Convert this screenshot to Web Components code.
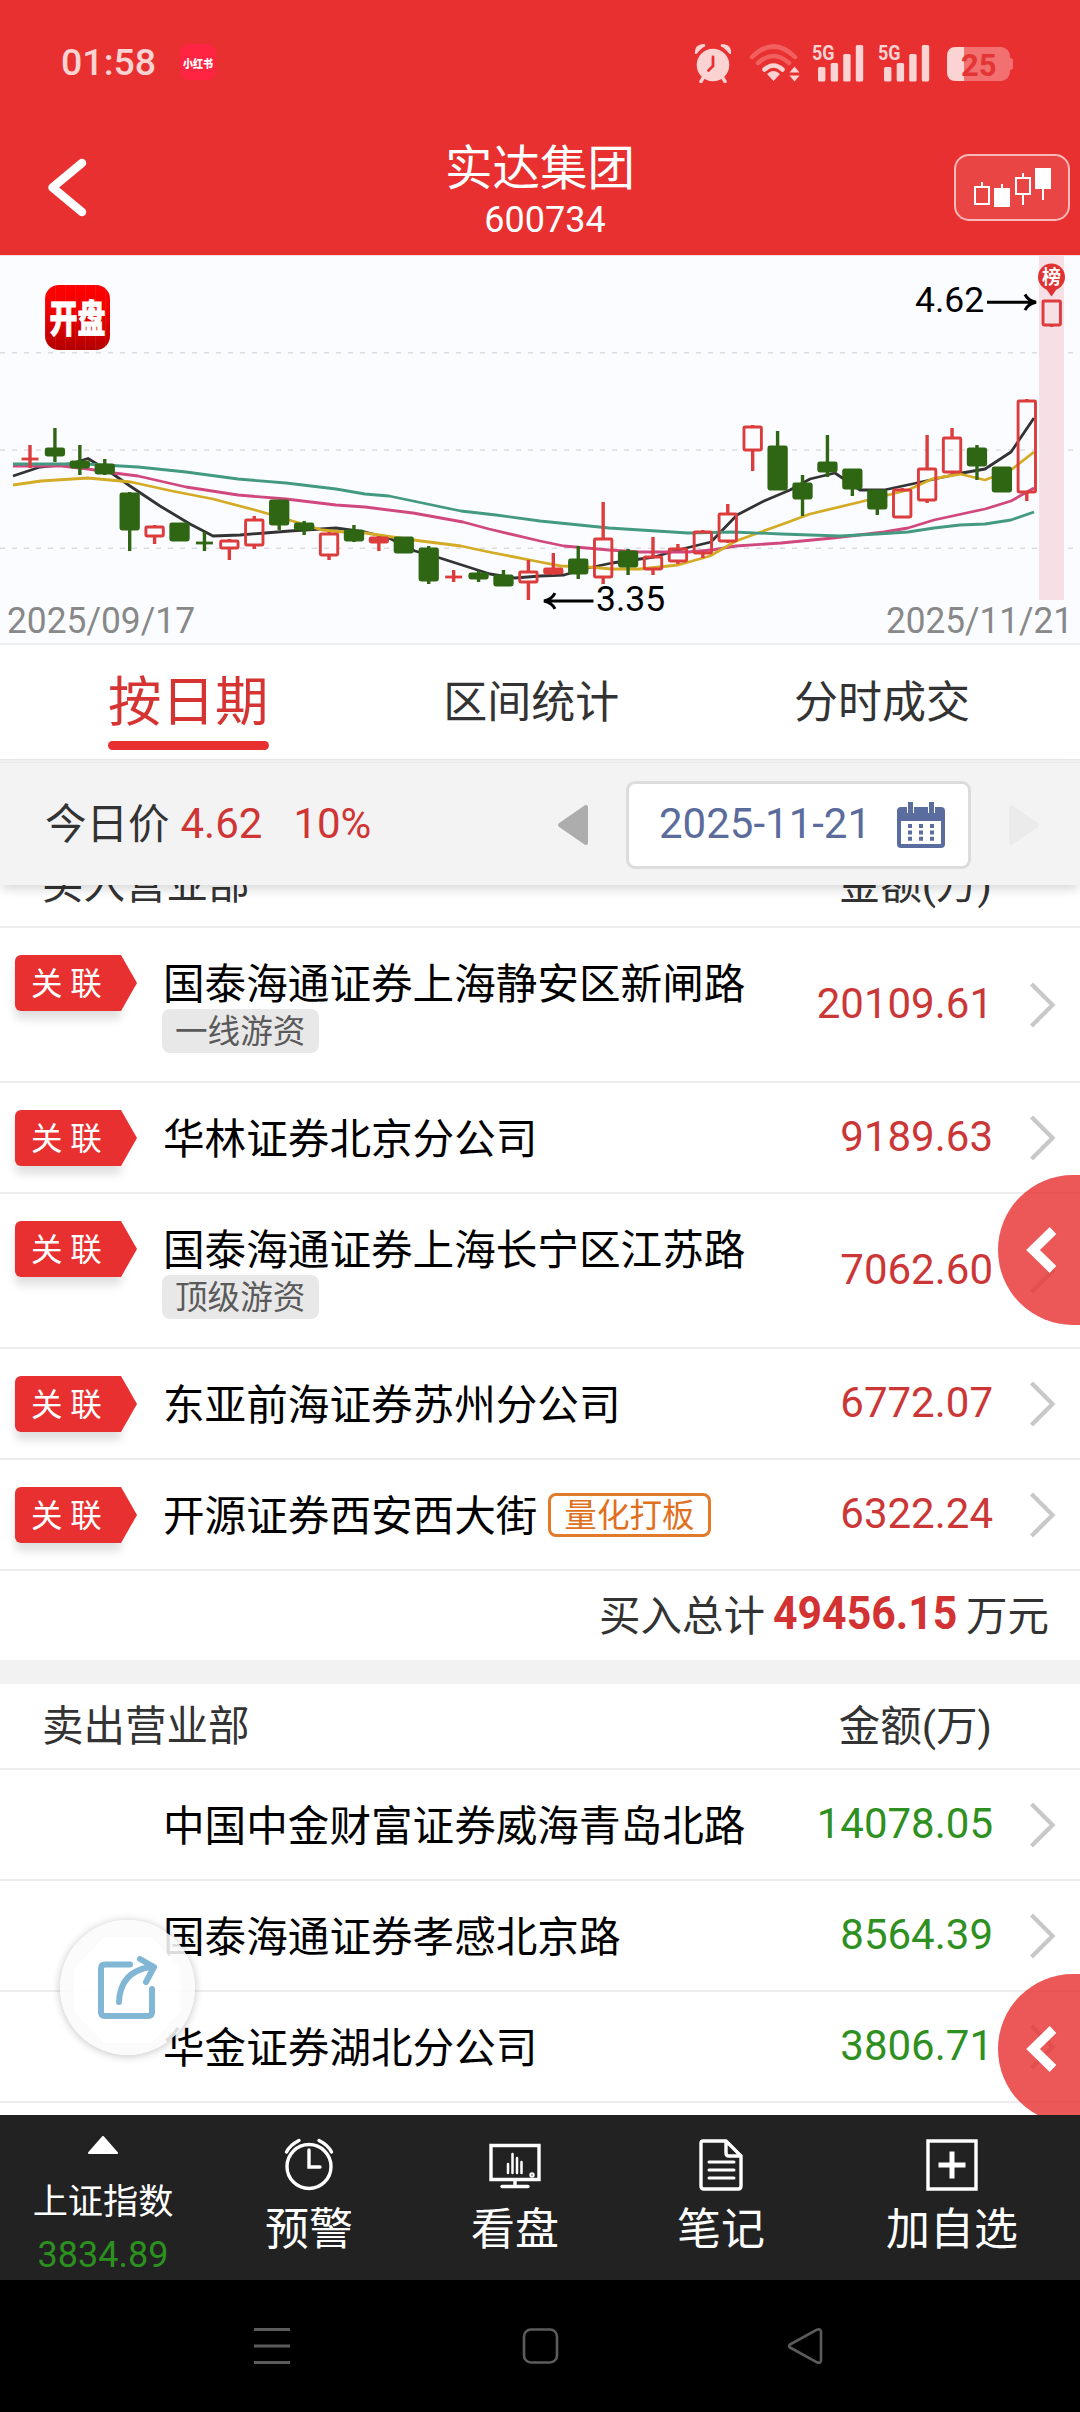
<!DOCTYPE html>
<html lang="zh-CN">
<head>
    <meta charset="UTF-8">
    <meta name="viewport" content="width=device-width, initial-scale=1.0">
    <title>实达集团 600734</title>
    <style>
        body {
            margin: 0;
            background: #fff;
            font-family: Roboto, 'Noto Sans CJK SC', sans-serif;
            font-weight: 400;
            color: #333;
        }
    </style>
</head>
<body>
    <stock-page>
        <status-bar slot="top" time="01:58" battery="25"></status-bar>
        <title-bar slot="top" name="实达集团" code="600734"></title-bar>
        <kline-chart slot="top" from="2025/09/17" to="2025/11/21"></kline-chart>
        <tab-bar slot="top">
            <tab-item active>按日期</tab-item>
            <tab-item>区间统计</tab-item>
            <tab-item>分时成交</tab-item>
        </tab-bar>
        <price-bar slot="top" price="4.62" rate="10%" date="2025-11-21"></price-bar>

        <seat-list class="buy" heading="买入营业部" style="margin-top: -43px">
            <seat-row linked amount="20109.61" tag="一线游资">国泰海通证券上海静安区新闸路</seat-row>
            <seat-row linked amount="9189.63">华林证券北京分公司</seat-row>
            <seat-row linked amount="7062.60" tag="顶级游资">国泰海通证券上海长宁区江苏路</seat-row>
            <seat-row linked amount="6772.07">东亚前海证券苏州分公司</seat-row>
            <seat-row linked amount="6322.24" quant="量化打板">开源证券西安西大街</seat-row>
            <seat-total slot="total" amount="49456.15"></seat-total>
        </seat-list>
        <seat-list heading="卖出营业部" style="--amount: #2f9022">
            <seat-row amount="14078.05">中国中金财富证券威海青岛北路</seat-row>
            <seat-row amount="8564.39">国泰海通证券孝感北京路</seat-row>
            <seat-row amount="3806.71">华金证券湖北分公司</seat-row>
        </seat-list>

        <side-handle slot="float" style="top: 1175px"></side-handle>
        <side-handle slot="float" style="top: 1974px"></side-handle>
        <share-button slot="float"></share-button>

        <tool-bar slot="bottom" index="上证指数" value="3834.89"></tool-bar>
        <nav-keys slot="bottom"></nav-keys>
    </stock-page>

    <script>
        // 简单基类：把模板写进 shadow root
        class BaseElement extends HTMLElement {
            constructor() {
                super();
                this.attachShadow({ mode: 'open' });
            }

            connectedCallback() {
                this.shadowRoot.innerHTML = this.render();
            }

            attr(name) {
                return this.getAttribute(name) || '';
            }
        }

        // 页面骨架
        class StockPage extends BaseElement {
            render() {
                return `
                    <style>
                        :host {
                            display: flex;
                            flex-direction: column;
                            position: relative;
                            width: 1080px;
                            height: 2412px;
                            overflow: hidden;
                        }
                        main {
                            flex: 1;
                            min-height: 0;
                            overflow: hidden;
                        }
                        header, footer {
                            position: relative;
                            z-index: 2;
                        }
                    </style>
                    <header><slot name="top"></slot></header>
                    <main><slot></slot></main>
                    <slot name="float"></slot>
                    <footer><slot name="bottom"></slot></footer>
                `;
            }
        }

        // 系统状态栏
        class StatusBar extends BaseElement {
            signal() {
                return `
                    <svg width="53" height="44" viewBox="0 -4 53 44" fill="#fcd3d3">
                        <text x="0" y="17.3" font-size="21" font-weight="700" textLength="22.500" lengthAdjust="spacingAndGlyphs">5G</text>
                        <rect x="6" y="24" width="7.4" height="14.5" rx="1.5"/>
                        <rect x="18.7" y="20" width="7.4" height="18.5" rx="1.5"/>
                        <rect x="31.2" y="11" width="7.4" height="27.5" rx="1.5"/>
                        <rect x="43.8" y="2" width="7.4" height="36.5" rx="1.5"/>
                    </svg>
                `;
            }

            render() {
                return `
                    <style>
                        :host {
                            display: flex;
                            align-items: center;
                            height: 124px;
                            padding: 0 67px 0 61px;
                            background: #e83030;
                            color: #fcd3d3;
                        }
                        .time {
                            font-size: 37.5px;
                            font-weight: 500;
                            width: 119px;
                        }
                        .app {
                            display: flex;
                            align-items: center;
                            justify-content: center;
                            width: 36px;
                            height: 36px;
                            border-radius: 9px;
                            background: #ff2442;
                            color: #fff;
                            font-size: 10px;
                            font-weight: 900;
                        }
                        .app span { transform: scaleY(1.15); }
                        .icons {
                            display: flex;
                            align-items: flex-end;
                            margin-left: auto;
                            gap: 13px;
                        }
                        .alarm { margin-right: 4px; }
                        .wifi { margin-right: -1px; }
                        .icons svg { margin-bottom: 2px; }
                    </style>
                    <span class="time">${this.attr('time')}</span>
                    <span class="app"><span>小红书</span></span>
                    <div class="icons">
                        <svg class="alarm" width="38" height="40" viewBox="0 0 38 40" fill="#fcd3d3">
                            <circle cx="19" cy="22" r="16.3"/>
                            <path d="M1 11Q0 1 10.500 1Q12 2 11 3.500Q7 5 2.500 11ZM37 11Q38 1 27.500 1Q26 2 27 3.500Q31 5 35.500 11Z"/>
                            <path d="M9 35l-2 3.500M29 35l2 3.500" stroke="#fcd3d3" stroke-width="3.500" stroke-linecap="round"/>
                            <path d="M19 14v9l-4.500 4.500" fill="none" stroke="#e83030" stroke-width="2.800" stroke-linecap="round"/>
                        </svg>
                        <svg class="wifi" width="51" height="40" viewBox="0 0 51 40" fill="none" stroke-width="4.500" stroke-linecap="round">
                            <path d="M3 14Q24.500 -7 46 14" stroke="#f25f5f"/>
                            <path d="M9 20Q24.500 6 40 20" stroke="#f25f5f"/>
                            <path d="M15.500 26.500Q24.500 18.500 33.500 26.500" stroke="#fcd3d3"/>
                            <path d="M18 31Q24.500 25 31 31L24.500 38ZM40.500 29.500l5-6 5 6ZM40.500 32.500l5 6 5-6Z" fill="#fcd3d3" stroke="none"/>
                        </svg>
                        ${this.signal()}
                        ${this.signal()}
                        <svg width="69" height="40" viewBox="-2 0 69 40">
                            <rect x="1" y="4" width="63" height="34" rx="9" fill="#f27070"/>
                            <path d="M64 15q3 0 3 3v6q0 3-3 3Z" fill="#f27070"/>
                            <path d="M18 4H10Q1 4 1 13V29Q1 38 10 38H18Z" fill="#fcd3d3"/>
                            <text x="15" y="32.500" font-size="31" font-weight="700" fill="#e33535">${this.attr('battery')}</text>
                        </svg>
                    </div>
                `;
            }
        }

        // 标题栏
        class TitleBar extends BaseElement {
            render() {
                return `
                    <style>
                        :host {
                            display: grid;
                            grid-template-columns: 126px 1fr 126px;
                            height: 131px;
                            background: #e83030;
                            color: #fff;
                        }
                        .back { margin: 31px 0 0 44px; }
                        .title {
                            display: flex;
                            flex-direction: column;
                            align-items: center;
                        }
                        .name {
                            margin-top: 12px;
                            font-size: 47.5px;
                            line-height: 66px;
                        }
                        .code {
                            padding-left: 10px;
                            font-size: 36px;
                            line-height: 36px;
                        }
                        .kbtn {
                            box-sizing: border-box;
                            width: 116px;
                            height: 67px;
                            margin-top: 30px;
                            border: 2px solid #f9b9b9;
                            border-radius: 15px;
                            background: rgba(255, 255, 255, .1);
                        }
                    </style>
                    <svg class="back" width="44" height="64" fill="none" stroke="#fff" stroke-width="8.500" stroke-linecap="round" stroke-linejoin="round">
                        <path d="M38 8L8.500 32.500L38 57"/>
                    </svg>
                    <div class="title">
                        <span class="name">${this.attr('name')}</span>
                        <span class="code">${this.attr('code')}</span>
                    </div>
                    <div class="kbtn">
                        <svg width="112" height="63" fill="none" stroke="#fff" stroke-width="2">
                            <path d="M19 31h14v17H19ZM26 30v-4M60 22h14v16H60ZM67 21v-4M67 39v10"/>
                            <path d="M39 33h14v17H39ZM80 13h14v19H80Z" fill="#fff"/>
                            <path d="M46 33v-5M87 32v12"/>
                        </svg>
                    </div>
                `;
            }
        }

        // K线：[颜色, 最高, 实体上沿, 实体下沿, 最低]，单位为图内像素
        const CANDLES = [
            ['r', 190, 204, 204, 213], ['g', 173, 193, 200, 207], ['g', 190, 206, 212, 220],
            ['g', 204, 209, 218, 220], ['g', 237, 238, 274, 296], ['r', 270, 271, 281, 289],
            ['g', 268, 268, 285, 285], ['g', 277, 288, 288, 296], ['r', 284, 285, 293, 305],
            ['r', 261, 264, 290, 294], ['g', 245, 245, 269, 275], ['g', 266, 268, 274, 280],
            ['r', 277, 278, 300, 305], ['g', 270, 275, 285, 287], ['r', 281, 282, 287, 296],
            ['g', 282, 282, 297, 298], ['g', 291, 293, 325, 329], ['r', 315, 322, 322, 327],
            ['g', 316, 318, 323, 327], ['g', 315, 320, 330, 330], ['r', 305, 316, 327, 345],
            ['r', 298, 313, 318, 320], ['g', 291, 304, 318, 324], ['r', 247, 283, 322, 329],
            ['g', 294, 296, 311, 320], ['r', 282, 301, 314, 320], ['r', 289, 293, 306, 309],
            ['r', 275, 276, 298, 303], ['r', 249, 258, 286, 288], ['r', 170, 171, 195, 216],
            ['g', 176, 191, 234, 234], ['g', 220, 228, 243, 261], ['g', 180, 207, 216, 222],
            ['g', 214, 214, 233, 241], ['g', 235, 235, 253, 260], ['r', 233, 234, 262, 263],
            ['r', 180, 213, 245, 248], ['r', 173, 182, 217, 219], ['g', 190, 193, 210, 225],
            ['g', 212, 212, 236, 237], ['r', 144, 145, 237, 246], ['r', 45, 45, 70, 72]
        ];

        // 四条均线
        const AVERAGES = [
            ['#333', '13,221 40,212 70,209 88,203.5 110,217 130,231 160,251 190,269 213,281 240,280 265,278 290,276 336,273 365,277 389,283 415,296 440,303 465,311 490,319 515,323 540,321 564,320 588,313 612,308 654,302 678,295 711,287 737,260 764,246 790,235 810,224 835,218 860,235 884,235 912,229 962,218 985,214 1011,197 1034,163'],
            ['#d1487f', '13,211 62,211 88,214 114,218 138,221 186,232 238,240 286,244 336,250 365,252 413,258 463,267 489,274 540,286 564,291 609,295 640,297 688,297 712,295 736,291 781,288 833,283 884,277 908,273 934,265 985,254 1011,246 1034,233'],
            ['#d3ab25', '13,230 41,226 88,223 131,227 172,236 213,244 255,255 286,264 322,275 344,277 365,278 413,285 461,291 489,297 540,307 561,311 588,312 612,314 640,314 678,310 710,301 736,286 783,269 810,259 860,247 908,235 932,224 960,219 985,225 1011,215 1034,197'],
            ['#439a80', '13,209 86,209 138,212 186,217 238,224 286,228 336,234 365,239 389,241 413,246 461,256 496,260 540,266 609,273 688,278 733,277 781,279 840,281 877,279 908,277 934,273 960,270 985,269 1011,265 1034,257']
        ];

        class KlineChart extends BaseElement {
            candle([color, high, top, bottom, low], i) {
                const x = 30 + 24.92 * i;
                const stroke = color === 'r' ? '#dc3c3c' : '#2f6613';
                const wick = (a, b) => b > a ? `<path d="M${x} ${a}V${b}" stroke="${stroke}" stroke-width="3.4"/>` : '';

                // 十字星
                if (top === bottom) {
                    return wick(high, low) + `<path d="M${x - 8.5} ${top}h17" stroke="${stroke}" stroke-width="2.8"/>`;
                }
                const hollow = color === 'r' && bottom - top > 5;
                return wick(high, top) + wick(bottom, low) +
                    `<rect x="${x - 8.7}" y="${top + 1}" width="17.4" height="${bottom - top - 1}" rx="1"
                        fill="${hollow ? 'none' : stroke}" stroke="${stroke}" stroke-width="2.9"/>`;
            }

            render() {
                const grid = [97.7, 195, 293.3].map(y => `<path d="M0 ${y}H1080"/>`).join('');
                const lines = AVERAGES.map(([c, p]) => `<polyline points="${p}" stroke="${c}"/>`).join('');
                return `
                    <style>
                        :host {
                            display: block;
                            position: relative;
                            height: 390px;
                            background: #fbfcff;
                            box-shadow: inset 0 1px #fdd9dc, inset 0 -2px #eeeff1;
                        }
                        svg { display: block; }
                        .logo {
                            position: absolute;
                            left: 45px;
                            top: 30px;
                            display: flex;
                            align-items: center;
                            justify-content: center;
                            width: 65px;
                            height: 65px;
                            border-radius: 14px;
                            background:
                                repeating-linear-gradient(90deg, rgba(255,255,255,.08) 0 1px, transparent 1px 10px),
                                linear-gradient(#ff0000, #f40000 35%, #b30000);
                            color: #fff;
                            font-size: 28px;
                            font-weight: 900;
                        }
                        .logo span {
                            margin-top: -3px;
                            transform: scaleY(1.35);
                            -webkit-text-stroke: .6px #fff;
                        }
                    </style>
                    <svg width="1080" height="390" viewBox="0 0 1080 390">
                        <g stroke="#dadce2" stroke-width="1.6" stroke-dasharray="5 7">${grid}</g>
                        <rect x="1039" y="1" width="25" height="344" fill="#f6dfe5"/>
                        <g fill="none" stroke-width="2.8" stroke-linejoin="round">${lines}</g>
                        ${CANDLES.map((c, i) => this.candle(c, i)).join('')}
                        <path d="M1051.500 41.500l-7-10h14Z" fill="#e03232"/>
                        <circle cx="1051.500" cy="22" r="13.500" fill="#e03232"/>
                        <text x="1042" y="29" font-size="19" font-weight="700" fill="#fff">榜</text>
                        <g fill="none" stroke="#000" stroke-width="3">
                            <path d="M987 47.300h48M1025 39.500q3 6 11 7.800q-8 1.800-11 7.800"/>
                            <path d="M593.500 346h-48M555 338.200q-3 6-11 7.800q8 1.800 11 7.800"/>
                        </g>
                        <g font-size="35.500" fill="#000">
                            <text x="915" y="57">4.62</text>
                            <text x="596" y="356">3.35</text>
                        </g>
                        <g font-size="36" fill="#888">
                            <text x="7" y="378" textLength="188" lengthAdjust="spacingAndGlyphs">${this.attr('from')}</text>
                            <text x="886" y="378" textLength="187" lengthAdjust="spacingAndGlyphs">${this.attr('to')}</text>
                        </g>
                    </svg>
                    <div class="logo"><span>开盘</span></div>
                `;
            }
        }

        // 标签页
        class TabBar extends BaseElement {
            render() {
                return `
                    <style>
                        :host {
                            display: flex;
                            justify-content: space-between;
                            height: 114px;
                            padding: 0 110px 0 108px;
                            background: #fff;
                        }
                    </style>
                    <slot></slot>
                `;
            }
        }

        class TabItem extends BaseElement {
            render() {
                return `
                    <style>
                        :host {
                            display: block;
                            font-size: 44px;
                            line-height: 117px;
                        }
                        :host([active]) {
                            color: #d63333;
                            font-size: 53.5px;
                            line-height: 115px;
                        }
                        i { display: none; }
                        :host([active]) i {
                            display: block;
                            height: 9px;
                            margin-top: -19px;
                            border-radius: 5px;
                            background: #e83030;
                        }
                    </style>
                    <slot></slot><i></i>
                `;
            }
        }

        // 当日价格和日期选择
        class PriceBar extends BaseElement {
            render() {
                return `
                    <style>
                        :host {
                            display: flex;
                            align-items: center;
                            box-sizing: border-box;
                            height: 126px;
                            padding: 5px 40px 0 45px;
                            background: #f3f3f3;
                            font-size: 41.5px;
                            box-shadow: inset 0 1px #e6e6e6, inset 0 3px #f1f1f1, inset 0 4px #e9e9e9, 0 6px 10px -2px rgba(0, 0, 0, .16);
                        }
                        .label { padding-bottom: 7px; }
                        b {
                            padding-bottom: 3px;
                            font-weight: 400;
                            font-size: 42px;
                            color: #cf3535;
                        }
                        .price { margin-left: 11px; }
                        .rate { margin-left: 31px; }
                        .prev { margin-left: auto; }
                        .date {
                            display: flex;
                            align-items: center;
                            justify-content: space-between;
                            box-sizing: border-box;
                            width: 345px;
                            height: 88px;
                            margin: 0 38px;
                            padding: 0 23px 0 30px;
                            border: 3px solid #dcdcdc;
                            border-radius: 9px;
                            background: #fff;
                            font-size: 42px;
                            color: #5b6c9c;
                        }
                        .date span { padding-bottom: 2px; }
                    </style>
                    <span class="label">今日价</span>
                    <b class="price">${this.attr('price')}</b>
                    <b class="rate">${this.attr('rate')}</b>
                    <svg class="prev" width="31" height="42" fill="#adadad" stroke="#adadad" stroke-width="4" stroke-linejoin="round"><path d="M3 21L29 3V39Z"/></svg>
                    <div class="date">
                        <span>${this.attr('date')}</span>
                        <svg width="48" height="48" viewBox="0 0 48 48">
                            <rect y="6" width="48" height="41" rx="4" fill="#5b6c9e"/>
                            <rect x="4" y="20" width="40" height="23" fill="#fff"/>
                            <path d="M13.500 1v11M34.500 1v11" stroke="#fff" stroke-width="7"/>
                            <path d="M13.500 1v11M34.500 1v11" stroke="#5b6c9e" stroke-width="5"/>
                            <path d="M13 23v18M24 23v18M35 23v18" stroke="#5b6c9e" stroke-width="4" stroke-dasharray="4 2.400"/>
                        </svg>
                    </div>
                    <svg width="31" height="42" fill="#ebebeb" stroke="#ebebeb" stroke-width="4" stroke-linejoin="round"><path d="M28 21L2 3V39Z"/></svg>
                `;
            }
        }

        // 营业部列表
        class SeatList extends BaseElement {
            render() {
                return `
                    <style>
                        :host {
                            display: block;
                            background: #fff;
                        }
                        .head {
                            display: flex;
                            align-items: center;
                            justify-content: space-between;
                            box-sizing: border-box;
                            height: 86px;
                            padding: 0 88px 7px 42px;
                            border-bottom: 2px solid #ededed;
                            font-size: 41.5px;
                        }
                    </style>
                    <div class="head"><span>${this.attr('heading')}</span><span>金额(万)</span></div>
                    <slot></slot>
                    <slot name="total"></slot>
                `;
            }
        }

        class SeatRow extends BaseElement {
            render() {
                const tag = this.attr('tag');
                const quant = this.attr('quant');
                return `
                    <style>
                        :host {
                            display: flex;
                            box-sizing: border-box;
                            min-height: 111px;
                            border-bottom: 2px solid #ededed;
                        }
                        .left {
                            width: 148px;
                            padding: 27px 0 0 15px;
                        }
                        .link {
                            display: flex;
                            align-items: center;
                            position: relative;
                            box-sizing: border-box;
                            width: 106px;
                            height: 56px;
                            padding: 0 0 4px 16px;
                            border-radius: 6px 0 0 6px;
                            background: #e83030;
                            box-shadow: 0 8px 10px rgba(0, 0, 0, .13);
                            color: #fff;
                            font-size: 31.5px;
                            white-space: nowrap;
                        }
                        .link::after {
                            content: '';
                            position: absolute;
                            left: 100%;
                            top: 0;
                            border: solid transparent;
                            border-width: 28px 0 28px 16px;
                            border-left-color: #e83030;
                        }
                        .info {
                            flex: 1;
                            padding-top: 27px;
                        }
                        .name {
                            display: flex;
                            align-items: center;
                            height: 56px;
                            color: #000;
                            font-size: 41.6px;
                            white-space: nowrap;
                        }
                        .text { padding-bottom: 5px; }
                        .tag, .quant {
                            display: flex;
                            align-items: center;
                            box-sizing: border-box;
                            width: fit-content;
                            height: 44px;
                            border-radius: 8px;
                            font-size: 32.6px;
                        }
                        .tag {
                            margin: -2px 0 28px -1px;
                            padding: 0 14px 5px 13px;
                            background: #e8e8e8;
                            color: #5a5a5a;
                        }
                        .quant {
                            margin-left: 11px;
                            padding: 0 13px 5px;
                            border: 3px solid #e07b2c;
                            color: #e07020;
                        }
                        .amount {
                            display: flex;
                            align-items: center;
                            padding-bottom: 3px;
                            color: var(--amount, #cb3737);
                            font-size: 42px;
                        }
                        .go {
                            align-self: center;
                            margin: 0 23px 0 36px;
                        }
                    </style>
                    <div class="left">${this.hasAttribute('linked') ? '<div class="link">关 联</div>' : ''}</div>
                    <div class="info">
                        <div class="name"><span class="text"><slot></slot></span>${quant ? `<span class="quant">${quant}</span>` : ''}</div>
                        ${tag ? `<div class="tag">${tag}</div>` : ''}
                    </div>
                    <span class="amount">${this.attr('amount')}</span>
                    <svg class="go" width="28" height="46" fill="none" stroke="#c8c8c8" stroke-width="4.200"><path d="M2.500 2L23.500 23L2.500 44"/></svg>
                `;
            }
        }

        class SeatTotal extends BaseElement {
            render() {
                return `
                    <style>
                        :host {
                            display: flex;
                            align-items: center;
                            justify-content: flex-end;
                            box-sizing: border-box;
                            height: 113px;
                            padding: 0 31px 5px 0;
                            border-bottom: 24px solid #f2f2f2;
                            font-size: 41.5px;
                        }
                        b {
                            width: 185px;
                            margin: 0 8px;
                            font-size: 46.5px;
                            transform: scaleX(.92);
                            transform-origin: 0 50%;
                            color: #d23232;
                        }
                    </style>
                    <span>买入总计</span><b>${this.attr('amount')}</b><span>万元</span>
                `;
            }
        }

        // 右侧半圆抽屉把手
        class SideHandle extends BaseElement {
            render() {
                return `
                    <style>
                        :host {
                            position: absolute;
                            right: 0;
                            z-index: 1;
                            width: 82px;
                            height: 150px;
                            border-radius: 75px 0 0 75px;
                            background: rgba(232, 48, 48, .81);
                        }
                        svg { display: block; }
                    </style>
                    <svg width="82" height="150" fill="none" stroke="#fff" stroke-width="9.500"><path d="M55 55.500L35 75L55 94.500"/></svg>
                `;
            }
        }

        // 分享悬浮按钮
        class ShareButton extends BaseElement {
            render() {
                return `
                    <style>
                        :host {
                            position: absolute;
                            left: 60px;
                            top: 1920px;
                            z-index: 1;
                            width: 135px;
                            height: 135px;
                            border-radius: 50%;
                            background: rgba(250, 250, 250, .88);
                            box-shadow: 0 1px 8px rgba(0, 0, 0, .24);
                        }
                        svg { display: block; }
                    </style>
                    <svg width="135" height="135" fill="none" stroke="#82b6d5" stroke-width="6" stroke-linecap="round" stroke-linejoin="round">
                        <path d="M44 17H92L121 49V91L92 123H44L14 91V49Z" fill="#fff" fill-opacity=".85" stroke="none"/>
                        <path d="M70 44.500H45q-4 0-4 4V92q0 4 4 4H88q4 0 4-4V69"/>
                        <path d="M59 82Q60 52 90 47"/>
                        <path d="M80 39L94 47L86 62"/>
                    </svg>
                `;
            }
        }

        // 底部工具栏
        const TOOLS = [
            ['预警', '<circle cx="28" cy="30.500" r="22"/><path d="M28 14v17h11M5.500 16Q9 9 18 4.500M50.500 16Q47 9 38 4.500"/>'],
            ['看盘', '<path d="M4 9.500H52V43.500H4ZM28 44v6M15 50.500H41"/><path d="M21 28v9M25.500 18v19M30 22v15M34.500 26v11" stroke-width="2.500"/><circle cx="45" cy="39" r="1" />'],
            ['笔记', '<path d="M10 5H33L48 20V50q0 3-3 3H11q-3 0-3-3V7q0-2 2-2ZM33 6V17q0 3 3 3H47"/><path d="M16 26H41M16 34H41M16 42H41" stroke-width="3"/>'],
            ['加自选', '<path d="M4 5H52V53H4Z" stroke-linecap="butt"/><path d="M28 15.500v27M14.500 29h27" stroke-width="5" stroke-linecap="butt"/>']
        ];

        class ToolBar extends BaseElement {
            render() {
                const items = TOOLS.map(([label, icon]) => `
                    <div class="item">
                        <svg width="56" height="58" fill="none" stroke="#fff" stroke-width="3.400" stroke-linecap="round">${icon}</svg>
                        <span>${label}</span>
                    </div>
                `).join('');
                return `
                    <style>
                        :host {
                            display: grid;
                            grid-template-columns: repeat(4, 206px) 1fr;
                            height: 165px;
                            background: #222;
                            color: #fff;
                        }
                        .item, .index {
                            display: flex;
                            flex-direction: column;
                            align-items: center;
                        }
                        .item {
                            padding-top: 21px;
                            font-size: 44px;
                            line-height: 72px;
                        }
                        .index {
                            padding-top: 21px;
                            font-size: 35.2px;
                            line-height: 50px;
                        }
                        .index svg { margin-bottom: 23px; }
                        .index b {
                            margin-top: 3px;
                            font-weight: 400;
                            font-size: 36px;
                            color: #2c9020;
                        }
                    </style>
                    <div class="index">
                        <svg width="30" height="18" fill="#fff" stroke="#fff" stroke-width="2" stroke-linejoin="round"><path d="M15 1L29 17H1Z"/></svg>
                        <span>${this.attr('index')}</span>
                        <b>${this.attr('value')}</b>
                    </div>
                    ${items}
                `;
            }
        }

        // 系统导航键
        class NavKeys extends BaseElement {
            render() {
                return `
                    <style>
                        :host {
                            display: flex;
                            align-items: center;
                            justify-content: space-between;
                            box-sizing: border-box;
                            height: 132px;
                            padding: 0 253px 0 252px;
                            background: #000;
                        }
                    </style>
                    <svg width="40" height="40" stroke="#5c5c5c" stroke-width="3"><path d="M2 3.500H38M2 20H38M2 36.500H38"/></svg>
                    <svg width="40" height="40" fill="none" stroke="#5c5c5c" stroke-width="2.600"><rect x="4" y="3.500" width="33" height="33" rx="7"/></svg>
                    <svg width="40" height="40" fill="none" stroke="#5c5c5c" stroke-width="2.600" stroke-linejoin="round"><path d="M3 18.500L30 3.700q4-1.500 4 2.300V34q0 4-4 2.300L3 21.500q-2-1.500 0-3Z"/></svg>
                `;
            }
        }

        // 注册所有自定义元素
        customElements.define('stock-page', StockPage);
        customElements.define('status-bar', StatusBar);
        customElements.define('title-bar', TitleBar);
        customElements.define('kline-chart', KlineChart);
        customElements.define('tab-bar', TabBar);
        customElements.define('tab-item', TabItem);
        customElements.define('price-bar', PriceBar);
        customElements.define('seat-list', SeatList);
        customElements.define('seat-row', SeatRow);
        customElements.define('seat-total', SeatTotal);
        customElements.define('side-handle', SideHandle);
        customElements.define('share-button', ShareButton);
        customElements.define('tool-bar', ToolBar);
        customElements.define('nav-keys', NavKeys);
    </script>
</body>
</html>
